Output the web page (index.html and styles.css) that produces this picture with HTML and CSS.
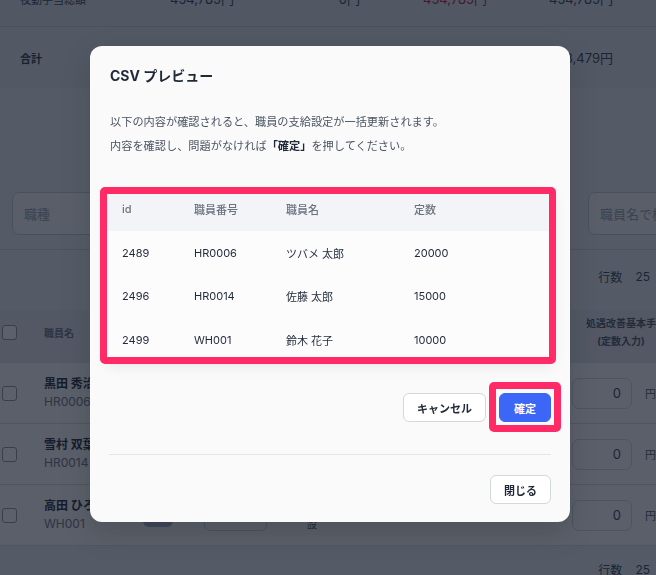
FILE: index.html
```html
<!DOCTYPE html>
<html lang="ja">
<head>
<meta charset="utf-8">
<title>CSV プレビュー</title>
<link rel="stylesheet" href="styles.css">
</head>
<body>
<div class="page">
  <div class="sum-row sum-first">
    <span class="sum-label">夜勤手当総額</span>
    <span class="num">454,785円</span>
    <span class="num">0円</span>
    <span class="num neg">-454,785円</span>
    <span class="num">454,785円</span>
  </div>
  <div class="sum-row sum-total">
    <span class="sum-label strong">合計</span>
    <span class="num">1,163,479円</span>
    <span class="num">0円</span>
    <span class="num">0円</span>
    <span class="num">1,163,479円</span>
  </div>

  <div class="filters">
    <div class="field field-left">職種</div>
    <div class="field field-right">職員名で検索</div>
  </div>

  <div class="count-bar"><span>行数</span><span class="count-num">25</span></div>

  <div class="list">
    <div class="list-head">
      <span class="cb"></span>
      <span class="head-name">職員名</span>
      <span></span><span></span><span></span>
      <span class="head-amount">処遇改善基本手当金額<br>(定数入力)</span>
      <span></span>
    </div>
    <div class="list-row">
      <span class="cb"></span>
      <div class="person"><div class="pname">黒田 秀治</div><div class="pcode">HR0006</div></div>
      <span class="pill"></span>
      <span class="mini-input"></span>
      <span class="note">支給設定<br>設</span>
      <span class="amount">0</span>
      <span class="yen">円</span>
    </div>
    <div class="list-row">
      <span class="cb"></span>
      <div class="person"><div class="pname">雪村 双葉</div><div class="pcode">HR0014</div></div>
      <span class="pill"></span>
      <span class="mini-input"></span>
      <span class="note">支給設定<br>設</span>
      <span class="amount">0</span>
      <span class="yen">円</span>
    </div>
    <div class="list-row">
      <span class="cb"></span>
      <div class="person"><div class="pname">高田 ひろし</div><div class="pcode">WH001</div></div>
      <span class="pill"></span>
      <span class="mini-input"></span>
      <span class="note">支給設定<br>設</span>
      <span class="amount">0</span>
      <span class="yen">円</span>
    </div>
  </div>

  <div class="count-bar count-bottom"><span>行数</span><span class="count-num">25</span></div>
</div>

<div class="overlay">
  <div class="modal">
    <h2 class="title">CSV プレビュー</h2>
    <div class="desc">
      <p>以下の内容が確認されると、職員の支給設定が一括更新されます。</p>
      <p>内容を確認し、問題がなければ<strong>「確定」</strong>を押してください。</p>
    </div>

    <div class="table-wrap">
      <div class="table">
        <div class="trow thead"><span>id</span><span>職員番号</span><span>職員名</span><span>定数</span></div>
        <div class="trow r1"><span>2489</span><span>HR0006</span><span>ツバメ 太郎</span><span>20000</span></div>
        <div class="trow r2"><span>2496</span><span>HR0014</span><span>佐藤 太郎</span><span>15000</span></div>
        <div class="trow r3"><span>2499</span><span>WH001</span><span>鈴木 花子</span><span>10000</span></div>
      </div>
      <div class="mark mark-table"></div>
    </div>

    <div class="actions">
      <button class="btn">キャンセル</button>
      <span class="confirm-wrap">
        <button class="btn primary">確定</button>
        <span class="mark mark-btn"></span>
      </span>
    </div>

    <div class="sep"></div>

    <div class="footer">
      <button class="btn">閉じる</button>
    </div>
  </div>
</div>
</body>
</html>
```

FILE: styles.css
```css
* { box-sizing: border-box; }

html, body {
  margin: 0;
  padding: 0;
  width: 656px;
  height: 575px;
  overflow: hidden;
}

body {
  font-family: Inter, "Noto Sans CJK JP", sans-serif;
  color: #374151;
  background: #e4e7eb;
}

.page {
  width: 656px;
  height: 575px;
  overflow: hidden;
}

/* summary rows */
.sum-row {
  display: grid;
  grid-template-columns: 94px 120px 126px 127px 126px;
  align-items: center;
  padding: 0 43px 0 20px;
  border-bottom: 1px solid #c9cdd4;
  font-size: 13px;
  color: #374151;
}
.sum-first {
  height: 56px;
  margin-top: -29px;
  background: #dfe2e7;
}
.sum-total {
  height: 61px;
  background: #e4e7eb;
  border-bottom: none;
}
.sum-label { font-size: 11px; }
.sum-label.strong { font-weight: 700; color: #2b313b; }
.num { text-align: right; }
.neg { color: #b4233b; }

/* filters */
.filters {
  display: flex;
  padding: 104px 0 14px 12px;
  border-bottom: 1px solid #cfd3d9;
  background: #eceef1;
}
.field {
  height: 43px;
  border: 1px solid #c6cad1;
  border-radius: 7px;
  background: #f7f8fa;
  font-size: 13px;
  color: #9aa0aa;
  display: flex;
  align-items: center;
  padding-left: 11px;
}
.field-left { width: 240px; }
.field-right { width: 140px; margin-left: auto; margin-right: -72px; }

/* row count */
.count-bar {
  display: flex;
  justify-content: flex-end;
  align-items: center;
  gap: 13px;
  height: 60px;
  padding: 0 6px 8px 0;
  font-size: 12px;
  color: #374151;
  background: #eceef1;
}
.count-num { font-size: 12px; }
.count-bottom { height: 46px; padding: 0 6px 0 0; }

/* list */
.list { background: #fbfbfc; }
.list-head,
.list-row {
  display: grid;
  grid-template-columns: 44px 99px 61px 103px 265px 68px 1fr;
  align-items: center;
}
.list-head {
  height: 53px;
  background: #e4e6ea;
}
.list-row {
  height: 61px;
  border-bottom: 1px solid #d9dce1;
}
.cb {
  width: 15px;
  height: 15px;
  margin-left: 2px;
  border: 1px solid #8d939c;
  border-radius: 3px;
  background: #fff;
}
.head-name { font-size: 10px; font-weight: 700; color: #6b7280; }
.head-amount {
  grid-column: 6 / 8;
  font-size: 10px;
  font-weight: 700;
  color: #4b5563;
  line-height: 18px;
  text-align: center;
  white-space: nowrap;
  margin-left: 14px;
}
.person { line-height: 18px; white-space: nowrap; }
.pname { font-size: 12px; font-weight: 700; color: #1f2937; }
.pcode { font-size: 12px; color: #6b7280; }
.pill {
  width: 30px;
  height: 22px;
  margin-top: 1px;
  border-radius: 6px;
  background: #a3aed0;
}
.mini-input {
  width: 63px;
  height: 31px;
  border: 1px solid #cdd1d7;
  border-radius: 6px;
}
.note { font-size: 10px; line-height: 18px; color: #4b5563; }
.amount {
  height: 31px;
  width: 60px;
  border: 1px solid #d1d5db;
  border-radius: 7px;
  display: flex;
  align-items: center;
  justify-content: flex-end;
  padding-right: 10px;
  font-size: 13px;
  color: #374151;
}
.yen { font-size: 11px; color: #4b5563; margin-left: 5px; }

/* overlay + modal */
.overlay {
  position: fixed;
  inset: 0;
  background: rgba(17, 24, 39, 0.69);
}
.modal {
  margin: 46px 0 0 90px;
  width: 480px;
  height: 476px;
  background: #fafafa;
  border-radius: 12px;
  padding: 20px 19px 18px 19px;
  box-shadow: 0 10px 30px rgba(0, 0, 0, 0.15);
}
.title {
  margin: 0;
  font-size: 14px;
  line-height: 20px;
  font-weight: 700;
  color: #1f2937;
  padding-left: 1px;
}
.desc {
  margin-top: 24px;
  padding-left: 1px;
  font-size: 11.2px;
  line-height: 24px;
  color: #4b5563;
}
.desc p { margin: 0; }
.desc strong { color: #1f2937; font-weight: 700; }

.table-wrap {
  position: relative;
  margin: 29px -3px 0 -3px;
}
.table {
  background: #fcfcfd;
  border-radius: 8px;
  box-shadow: 0 6px 14px rgba(0, 0, 0, 0.07);
  overflow: hidden;
}
.trow {
  display: grid;
  grid-template-columns: 72px 92px 128px 1fr;
  align-items: center;
  padding-left: 16px;
  font-size: 11px;
  color: #1f2937;
}
.thead {
  height: 44px;
  background: #f2f4f7;
  color: #6b7280;
  font-weight: 500;
}
.r1 { height: 43px; }
.r2 { height: 44px; }
.r3 { height: 43px; }

.mark {
  position: absolute;
  border: 7px solid #ff2a66;
  border-radius: 5px;
  pointer-events: none;
}
.mark-table { top: 0; left: -6px; right: -2px; bottom: -3px; }

.actions {
  margin-top: 32px;
  display: flex;
  justify-content: flex-end;
  gap: 13px;
}
.confirm-wrap { position: relative; display: inline-flex; }
.mark-btn { top: -11px; left: -10px; right: -10px; bottom: -10px; }

.btn {
  height: 29px;
  padding: 0 13px;
  border: 1px solid #d4d7dd;
  border-radius: 6px;
  background: #fff;
  font-family: Inter, "Noto Sans CJK JP", sans-serif;
  font-size: 11px;
  font-weight: 700;
  color: #1f2937;
  cursor: pointer;
}
.btn.primary {
  background: #3c66f5;
  border-color: #3c66f5;
  color: #fff;
  padding: 0 14px;
}

.sep {
  margin-top: 32px;
  height: 1px;
  background: #e3e5e9;
}
.footer {
  margin-top: 20px;
  display: flex;
  justify-content: flex-end;
}
```
